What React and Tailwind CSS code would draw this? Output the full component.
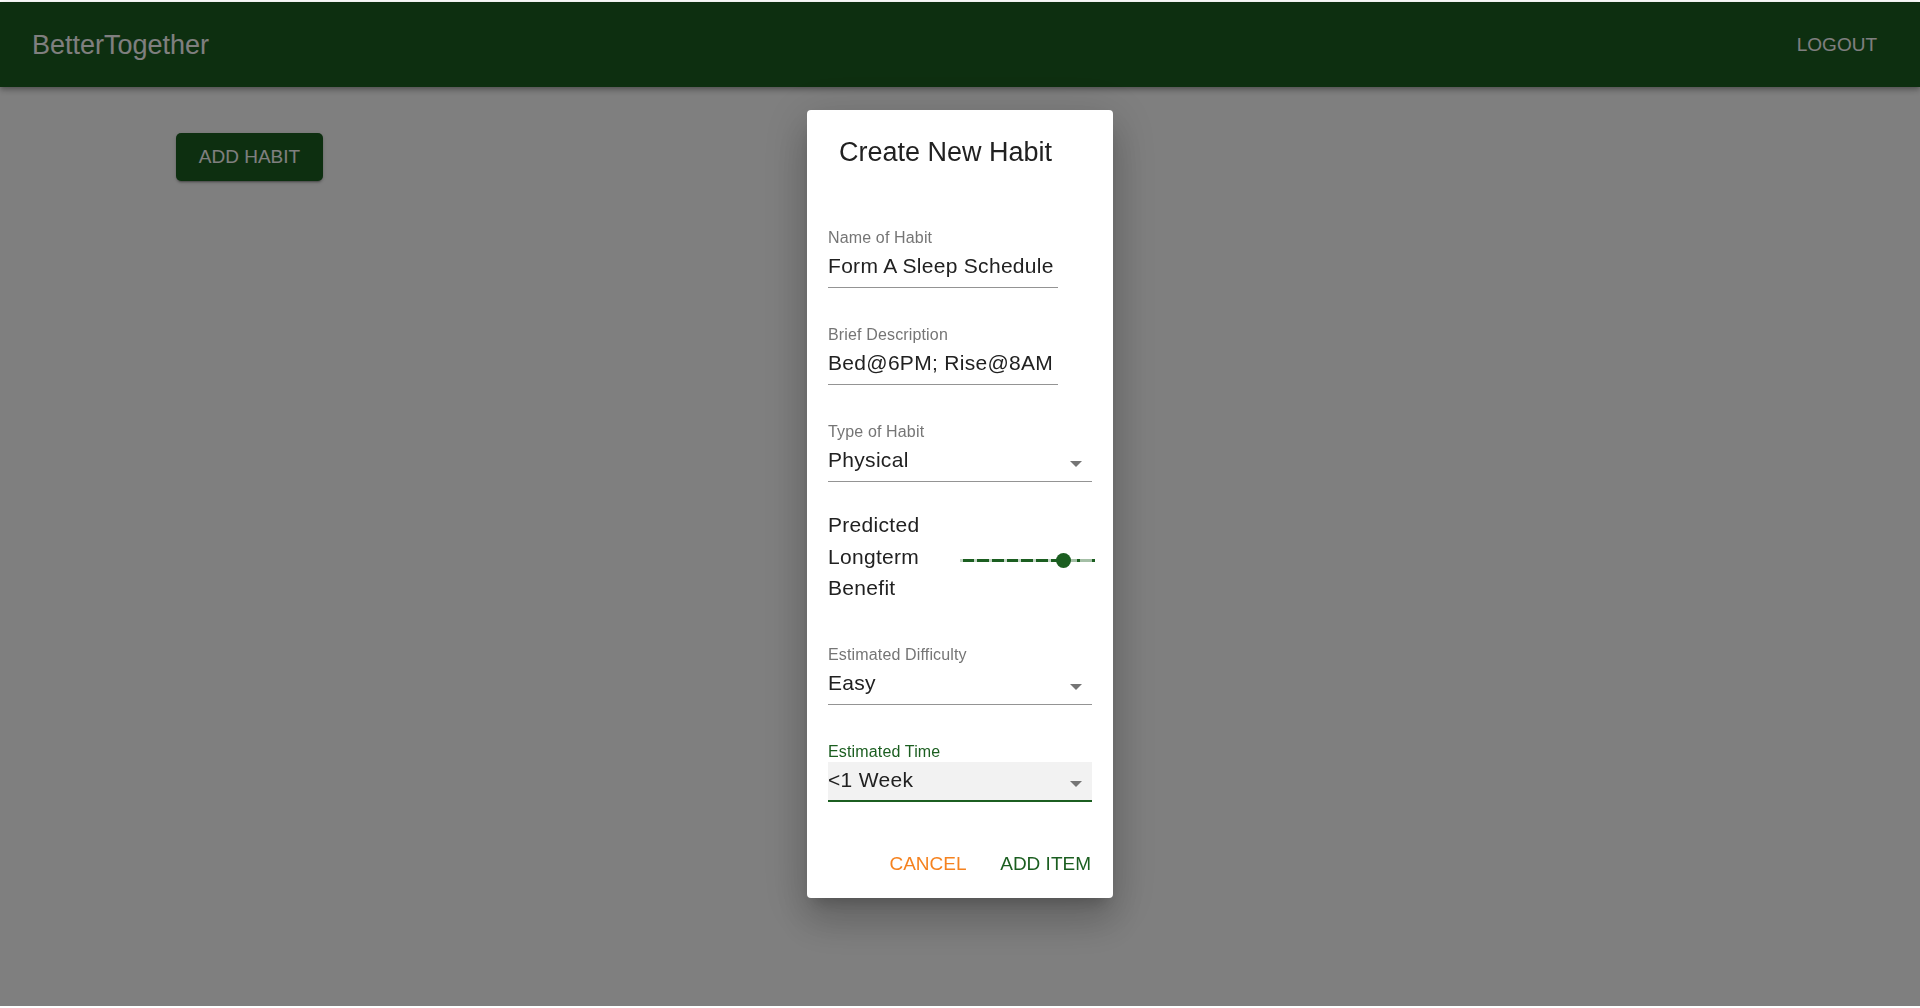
import React from "react";

function Field({ label, value, wide, select, focused }) {
  return (
    <div className={wide ? "w-[264px]" : "w-[230px]"}>
      <div
        className={
          "h-[20px] text-[16px] leading-[20px] tracking-[0.15px] " +
          (focused ? "text-[#1b5e20]" : "text-[#757575]")
        }
      >
        {label}
      </div>
      <div
        className={
          "flex items-end justify-between pt-[4.5px] " +
          (focused
            ? "border-b-2 border-[#1b5e20] bg-[#f2f2f2] pb-[7.5px]"
            : "border-b border-[#949494] pb-[8.5px]")
        }
      >
        <span className="whitespace-nowrap text-[21px] leading-[26px] tracking-[0.3px] text-[#212121]">
          {value}
        </span>
        {select && (
          <svg className="mb-[6px] mr-[10px]" width="12" height="6" viewBox="0 0 12 6">
            <path d="M0 0h12L6 6z" fill="#757575" />
          </svg>
        )}
      </div>
    </div>
  );
}

function Slider() {
  const marks = Array.from({ length: 10 }, (_, i) => i);
  const step = 14.7;
  const value = 7;
  const thumb = 1 + step * value;
  return (
    <div className="relative mt-[43px] h-[16px] w-[135px]">
      <div className="absolute left-0 right-0 top-[6.5px] h-[3px] bg-[#1b5e20]/40" />
      <div
        className="absolute left-0 top-[6.5px] h-[3px] bg-[#1b5e20]"
        style={{ width: thumb }}
      />
      {marks.map((i) => (
        <div
          key={i}
          className={
            "absolute top-[6.5px] h-[3px] w-[3px] " +
            (i < value ? "bg-white/75" : "bg-[#1b5e20]")
          }
          style={{ left: 1 + step * i - 1.5 }}
        />
      ))}
      <div
        className="absolute top-[0.5px] h-[15px] w-[15px] rounded-full bg-[#1b5e20]"
        style={{ left: thumb - 7.5 }}
      />
    </div>
  );
}

export default function App() {
  return (
    <div className="relative h-[1008px] w-full overflow-hidden bg-white pt-[2px] font-['Liberation_Sans',Arial,sans-serif]">
      <header className="flex h-[85px] items-center justify-between bg-[#1b5e20] pl-[32px] pr-[43px] shadow-[0px_2px_4px_-1px_rgba(0,0,0,0.2),0px_4px_5px_0px_rgba(0,0,0,0.14),0px_1px_10px_0px_rgba(0,0,0,0.12)]">
        <span className="text-[27px] leading-[32px] text-white">BetterTogether</span>
        <span className="text-[19px] leading-[24px] text-white">LOGOUT</span>
      </header>
      <main className="pl-[176px] pt-[46px]">
        <button className="h-[48px] w-[147px] rounded-[5px] bg-[#1b5e20] text-[19px] leading-[24px] text-white shadow-[0px_3px_1px_-2px_rgba(0,0,0,0.2),0px_2px_2px_0px_rgba(0,0,0,0.14),0px_1px_5px_0px_rgba(0,0,0,0.12)]">
          ADD HABIT
        </button>
      </main>

      <div className="fixed inset-x-0 bottom-[2px] top-[2px] flex items-center justify-center bg-black/50">
        <div className="w-[306px] rounded-[4px] bg-white pb-[22px] pt-[26px] shadow-[0px_11px_15px_-7px_rgba(0,0,0,0.2),0px_24px_38px_3px_rgba(0,0,0,0.14),0px_9px_46px_8px_rgba(0,0,0,0.12)]">
          <h2 className="pl-[32px] text-[27px] leading-[32px] text-[#212121]">Create New Habit</h2>
          <div className="flex flex-col pl-[21px]">
            <div className="mt-[60px]">
              <Field label="Name of Habit" value="Form A Sleep Schedule" />
            </div>
            <div className="mt-[37px]">
              <Field label="Brief Description" value="Bed@6PM; Rise@8AM" />
            </div>
            <div className="mt-[37px]">
              <Field label="Type of Habit" value="Physical" wide select />
            </div>
            <div className="mt-[27px] flex items-start">
              <div className="w-[132px] text-[21px] leading-[31.5px] tracking-[0.3px] text-[#212121]">
                Predicted Longterm Benefit
              </div>
              <Slider />
            </div>
            <div className="mt-[41.3px]">
              <Field label="Estimated Difficulty" value="Easy" wide select />
            </div>
            <div className="mt-[37px]">
              <Field label="Estimated Time" value="<1 Week" wide select focused />
            </div>
          </div>
          <div className="mt-[49.3px] flex justify-end gap-[33.7px] pr-[22px]">
            <button className="text-[19px] leading-[24px] text-[#f5821f]">CANCEL</button>
            <button className="text-[19px] leading-[24px] text-[#1b5e20]">ADD ITEM</button>
          </div>
        </div>
      </div>
    </div>
  );
}
